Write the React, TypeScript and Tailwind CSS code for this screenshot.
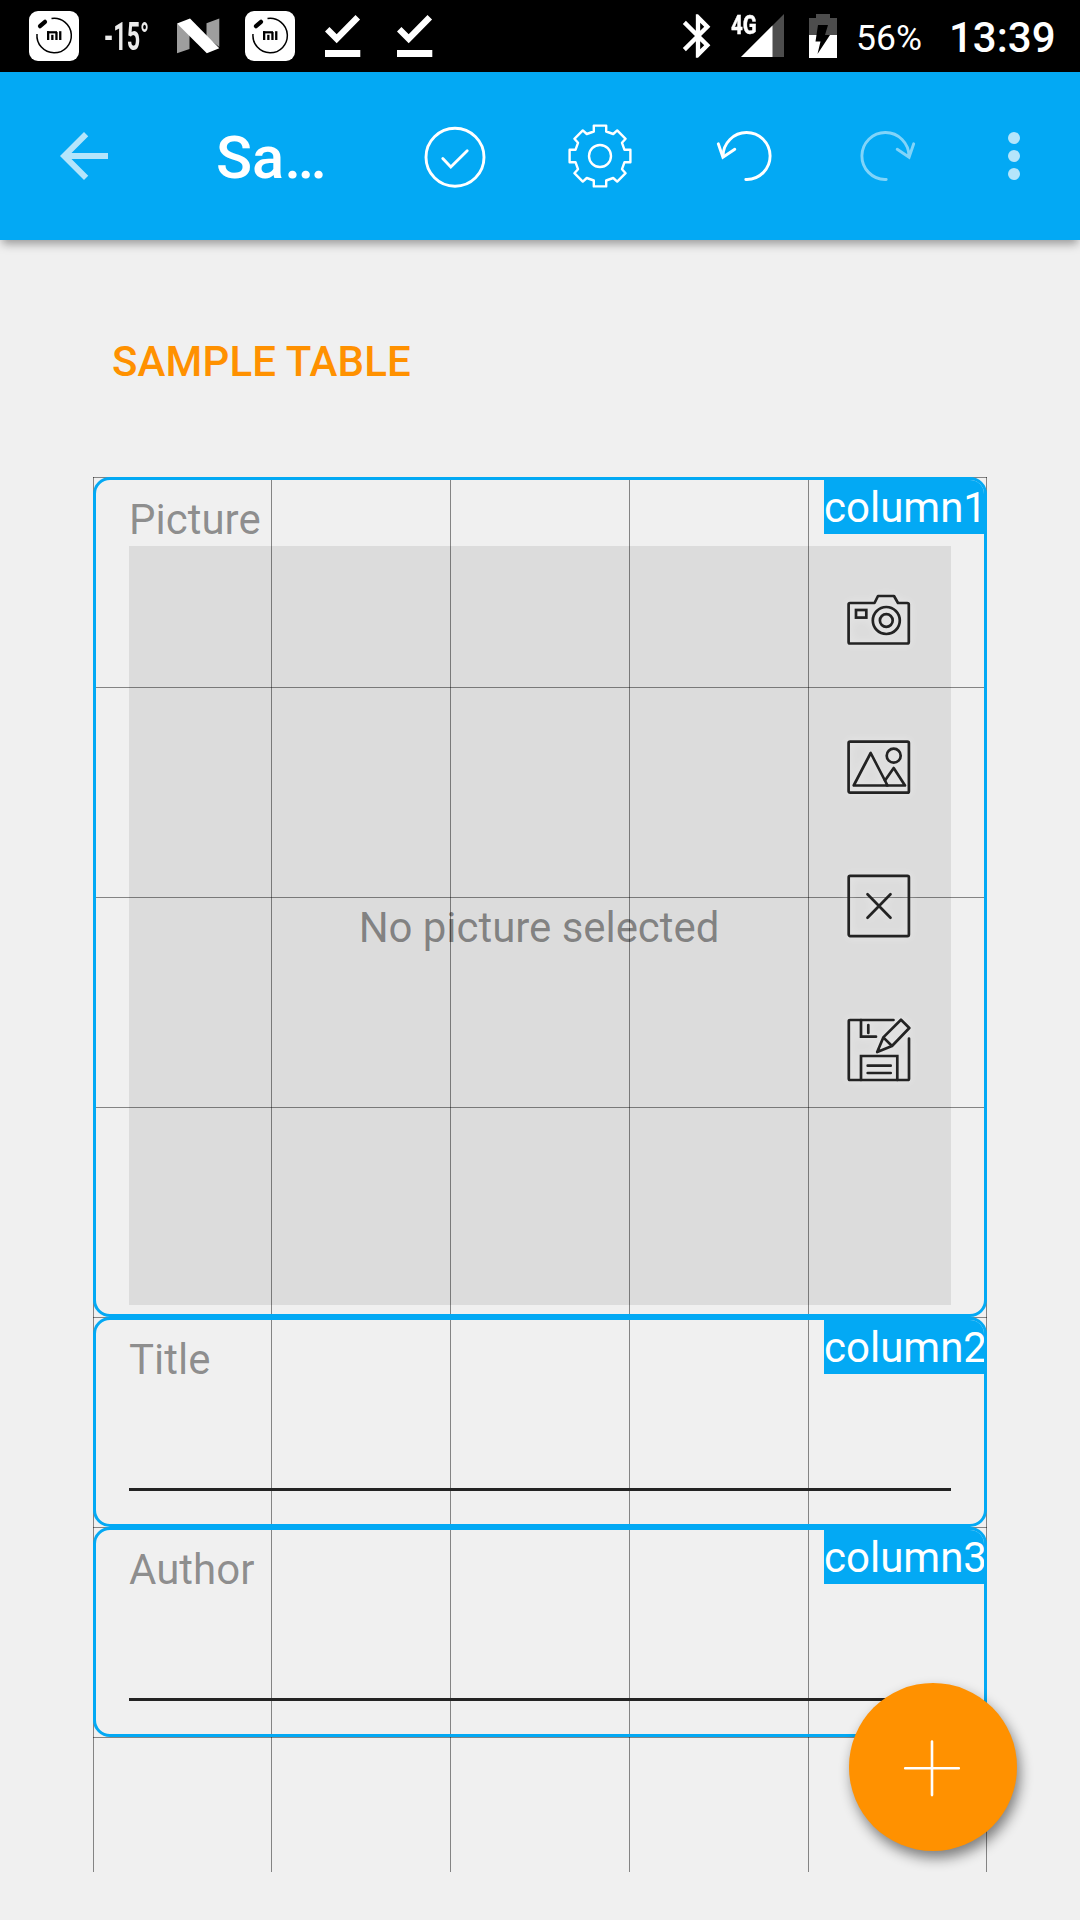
import type { ReactNode } from "react";

const columnWidths = ["w-[178px]", "w-[179px]", "w-[179px]", "w-[179px]", "w-[179px] border-r"];
const rows = [0, 1, 2, 3, 4, 5, 6];

function MiIcon() {
  return (
    <svg width="50" height="50" viewBox="0 0 50 50" className="shrink-0">
      <rect width="50" height="50" rx="9" fill="#fff" />
      <path d="M22.5 7.6 A17.2 17.2 0 1 1 8 23" fill="none" stroke="#000" strokeWidth="1.5" />
      <path d="M11 15.2 L16 10.8" stroke="#000" strokeWidth="4.2" strokeLinecap="round" />
      <g fill="#000">
        <rect x="18" y="20.2" width="10" height="2.2" />
        <rect x="18" y="20.2" width="2.3" height="8.8" />
        <rect x="22.2" y="23.8" width="2.3" height="5.2" />
        <rect x="26.3" y="21" width="2.3" height="8" />
        <rect x="30.1" y="20.2" width="2.3" height="8.8" />
      </g>
    </svg>
  );
}

function DoneIcon() {
  return (
    <svg width="36" height="44" viewBox="0 0 36 44" className="shrink-0">
      <path d="M2.2 15.2 L11.7 24.7 L32.8 3.3" fill="none" stroke="#fff" strokeWidth="6.4" />
      <rect x="0" y="36" width="35.3" height="7" fill="#fff" />
    </svg>
  );
}

function StatusBar() {
  return (
    <div className="flex h-[72px] w-full items-center bg-black text-white">
      <div className="ml-[29px] flex">
        <MiIcon />
      </div>
      <div className="ml-[25px] flex h-[72px] w-[46px] items-center pt-[2px]">
        <span className="inline-block origin-left scale-x-[0.6] whitespace-nowrap text-[39px] font-bold leading-none text-[#ececec]">
          -15°
        </span>
      </div>
      <svg width="43" height="36" viewBox="0 0 43 36" className="ml-[27px] shrink-0">
        <path d="M0 5.8 L12.5 13 V31 L0 35.3Z M29.5 5.2 L42.3 0.5 V29 L29.5 19Z" fill="#9e9e9e" />
        <path d="M0 5.6 L13 0.5 L42.3 30.3 L29.8 35.3Z" fill="#fff" />
      </svg>
      <div className="ml-[25px] flex">
        <MiIcon />
      </div>
      <div className="ml-[30px] flex gap-9">
        <DoneIcon />
        <DoneIcon />
      </div>
      <svg width="52" height="52" viewBox="0 0 24 24" className="ml-[239px] shrink-0">
        <path
          fill="#fff"
          d="M17.71 7.71L12 2h-1v7.59L6.41 5 5 6.41 10.59 12 5 17.59 6.41 19 11 14.41V22h1l5.71-5.71-4.3-4.29 4.3-4.29zM13 5.83l1.88 1.88L13 9.59V5.83zm1.88 10.46L13 18.17v-3.76l1.88 1.88z"
        />
      </svg>
      <div className="relative ml-[17px] h-[44px] w-[43px] shrink-0">
        <svg width="43" height="44" viewBox="0 0 43 44">
          <path d="M0 43 L43 0 V43Z" fill="#4d4d4d" />
          <path d="M0 43 L31.5 11.5 V43Z" fill="#fff" />
        </svg>
        <span className="absolute -left-[10px] -top-[1px] origin-left scale-x-[0.8] text-[25.5px] font-extrabold leading-none [-webkit-text-stroke:0.4px_white]">
          4G
        </span>
      </div>
      <svg width="28" height="44" viewBox="0 0 28 44" className="ml-[25px] shrink-0">
        <path d="M7 0 H21 V4 H28 V21 H0 V4 H7Z" fill="#4d4d4d" />
        <rect y="21" width="28" height="23" fill="#fff" />
        <path d="M9 11 H19 L16 21 H21 L8.5 40 L11.5 27.5 H6.5Z" fill="#000" />
      </svg>
      <span className="ml-[19px] w-[96px] text-[35.5px] leading-none">
        <span className="relative top-[3px]">56%</span>
      </span>
      <span className="relative top-[2px] ml-[-3px] text-[42px] font-medium leading-none">13:39</span>
    </div>
  );
}

function BarIcon({ children, className }: { children: ReactNode; className: string }) {
  return (
    <svg
      width="72"
      height="72"
      viewBox="-36 -36 72 72"
      fill="none"
      stroke="#fff"
      strokeWidth="2.9"
      strokeLinecap="round"
      className={className}
    >
      {children}
    </svg>
  );
}

function AppBar() {
  return (
    <header className="relative z-10 flex h-[168px] w-full items-center bg-[#03a9f4] shadow-[0_6px_9px_-2px_rgba(0,0,0,0.36)]">
      <svg width="72" height="72" viewBox="0 0 24 24" className="ml-12 shrink-0 opacity-70">
        <path fill="#fff" d="M20 11H7.83l5.59-5.59L12 4l-8 8 8 8 1.41-1.41L7.83 13H20v-2z" />
      </svg>
      <h1 className="ml-[96px] w-[202px] shrink-0 whitespace-nowrap pt-[6px] text-[59.6px] font-medium leading-none text-white">Sa…</h1>
      <BarIcon className="shrink-0">
        <circle cx="1" cy="1.2" r="29" />
        <path d="M-11.2 2.5 L-3.2 11 L13.2 -5.2" />
      </BarIcon>
      <BarIcon className="ml-[74px] shrink-0">
        <path
          strokeWidth="2.4"
          strokeLinejoin="round"
          d="M-6.2 -30.4 H6.2 V-24.5 L13.2 -22 L17.2 -25.6 L25.6 -17.2 L22 -13.2 L24.5 -6.2 H30.4 V6.2 H24.5 L22 13.2 L25.6 17.2 L17.2 25.6 L13.2 22 L6.2 24.5 V30.4 H-6.2 V24.5 L-13.2 22 L-17.2 25.6 L-25.6 17.2 L-22 13.2 L-24.5 6.2 H-30.4 V-6.2 H-24.5 L-22 -13.2 L-25.6 -17.2 L-17.2 -25.6 L-13.2 -22 L-6.2 -24.5Z"
        />
        <circle r="11" strokeWidth="2.4" />
      </BarIcon>
      <BarIcon className="ml-[75px] shrink-0">
        <path d="M-1.2 23.5 H0 A23.5 23.5 0 1 0 -23.9 0" />
        <path d="M-28.7 -12.2 L-24.1 1.2 L-12.2 -6.8" />
      </BarIcon>
      <BarIcon className="ml-[66px] shrink-0 opacity-50">
        <path d="M1.2 23.5 H0 A23.5 23.5 0 1 1 23.9 0 M28.7 -12.2 L24.1 1.2 L12.2 -6.8" />
      </BarIcon>
      <svg width="72" height="72" viewBox="0 0 24 24" className="ml-[57px] shrink-0 opacity-70" fill="#fff">
        <circle cx="12" cy="6" r="2" />
        <circle cx="12" cy="12" r="2" />
        <circle cx="12" cy="18" r="2" />
      </svg>
    </header>
  );
}

function GridLines() {
  return (
    <div className="absolute inset-0">
      <div className="absolute inset-0 flex">
        {columnWidths.map((width, i) => (
          <div key={i} className={`h-full shrink-0 border-l border-black/45 ${width}`} />
        ))}
      </div>
      <div className="absolute inset-0 overflow-hidden">
        {rows.map((row) => (
          <div key={row} className="h-[210px] border-t border-black/45" />
        ))}
      </div>
    </div>
  );
}

function Field({ label, column, height, children }: { label: string; column: string; height: string; children: ReactNode }) {
  return (
    <section
      className={`relative flex flex-col overflow-hidden rounded-[17px] border-[3px] border-[#03a9f4] px-[33px] ${height}`}
    >
      <div className="h-[66px] pt-[15px] text-[42px] leading-[49px] text-black/42">{label}</div>
      <div className="absolute -right-[3px] -top-[3px] h-[57px] w-[163px] whitespace-nowrap bg-[#03a9f4] pt-[6px] text-[42px] leading-[49px] text-white">
        {column}
      </div>
      {children}
    </section>
  );
}

function ActionIcon({ top, children }: { top: string; children: ReactNode }) {
  return (
    <svg
      width="66"
      height="66"
      viewBox="0 0 66 66"
      fill="none"
      stroke="#232323"
      strokeWidth="2.7"
      strokeLinejoin="round"
      strokeLinecap="round"
      className={`shrink-0 drop-shadow-[0_0_4px_rgba(255,255,255,0.55)] ${top}`}
    >
      {children}
    </svg>
  );
}

export default function App() {
  return (
    <div className="relative h-[1920px] w-[1080px] overflow-hidden bg-[#f0f0f0] font-['Roboto',sans-serif]">
      <StatusBar />
      <AppBar />
      <main className="px-[93px]">
        <h2 className="ml-[19px] pt-[97px] text-[42px] font-medium leading-[49px] tracking-[0.15px] text-[#ff9100]">
          SAMPLE TABLE
        </h2>
        <div className="relative mt-[91px] h-[1395px] w-[894px]">
          <GridLines />
          <Field label="Picture" column="column1" height="h-[840px]">
            <div className="relative flex h-[759px] w-[822px] shrink-0 items-center justify-center bg-black/[0.083]">
              <span className="pr-[2px] pt-[3px] text-[42px] leading-[49px] tracking-[-0.05px] text-black/42">No picture selected</span>
              <div className="absolute right-[39px] top-0 flex h-full flex-col">
                <ActionIcon top="mt-[41px]">
                  <path d="M4 16 H28.5 L32 9 H48 L52 16 H61.2 Q62.8 16 62.8 17.5 V55 Q62.8 56.5 61.2 56.5 H4 Q2.6 56.5 2.6 55 V17.5 Q2.6 16 4 16Z" />
                  <rect x="10" y="23" width="10.3" height="7.6" strokeLinejoin="miter" />
                  <circle cx="40.3" cy="33.5" r="13.5" />
                  <circle cx="40.3" cy="33.5" r="6.4" />
                </ActionIcon>
                <ActionIcon top="mt-[81px]">
                  <rect x="2.6" y="7.7" width="60.3" height="51" rx="1.5" />
                  <path d="M24.7 19 L7.7 51.5 H41.5Z" />
                  <path d="M39 46.5 L47.7 34 L59 51.5 H41" />
                  <circle cx="47.7" cy="21.7" r="7" />
                </ActionIcon>
                <ActionIcon top="mt-[73px]">
                  <rect x="2.7" y="2.9" width="60.2" height="60.2" rx="1.5" />
                  <path d="M21.5 21.3 L44.5 44.7 M44.5 21.3 L21.5 44.7" />
                </ActionIcon>
                <ActionIcon top="mt-[78px]">
                  <path d="M47.5 3 H4 Q2.8 3 2.8 4.2 V61.8 Q2.8 63 4 63 H61.8 Q63 63 63 61.8 V21.5" />
                  <path d="M15 3 V19.7 H30 M22.3 8 V16 M15 63 V39 H51.3 V63 M21.7 48.7 H44.7 M21.7 56 H44.7" strokeLinejoin="miter" />
                  <path d="M31.2 35 L37.3 20.4 L55 2.8 L63.3 11 L46 29Z M37.3 20.4 L46 29" />
                </ActionIcon>
              </div>
            </div>
          </Field>
          <Field label="Title" column="column2" height="h-[210px]">
            <div className="mt-[102px] h-[3px] shrink-0 bg-[#232323]" />
          </Field>
          <Field label="Author" column="column3" height="h-[210px]">
            <div className="mt-[102px] h-[3px] shrink-0 bg-[#232323]" />
          </Field>
        </div>
      </main>
      <button className="absolute bottom-[69px] right-[63px] flex size-[168px] items-center justify-center rounded-full bg-[#ff9100] shadow-[3px_7px_13px_rgba(0,0,0,0.48)]">
        <svg width="60" height="60" viewBox="0 0 60 60" stroke="#fff" strokeWidth="2.6">
          <path d="M2.2 31.3 H55.8 M29 4.5 V58.1" strokeLinecap="round" />
        </svg>
      </button>
    </div>
  );
}
